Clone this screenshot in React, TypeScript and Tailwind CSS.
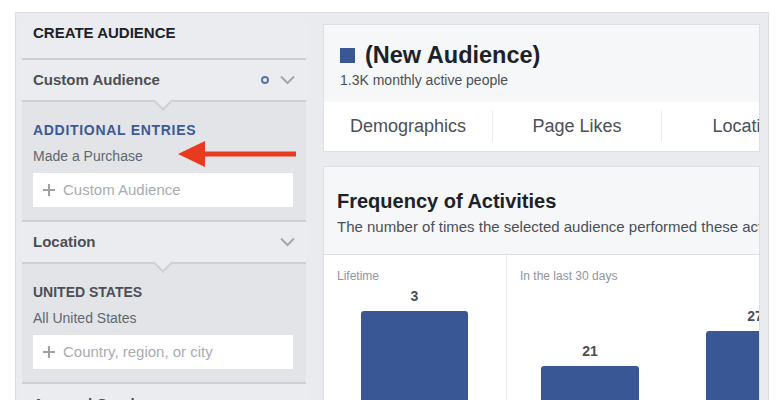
import React from 'react';

const BLUE = '#3a5795';

function Divider() {
  return <div className="h-[2px] bg-[#cdd0d4]" />;
}

function Notch() {
  return (
    <div className="absolute left-[134px] top-[-8px] z-10 h-[14px] w-[14px] rotate-45 border-r-2 border-b-2 border-[#cdd0d4] bg-[#ebecef]" />
  );
}

function Chevron() {
  return (
    <svg width="15" height="10" viewBox="0 0 15 10" fill="none">
      <path d="M1 1.5l6.5 6.5 6.5-6.5" stroke="#a3a7ad" strokeWidth="2" />
    </svg>
  );
}

function PlusInput({ placeholder }: { placeholder: string }) {
  return (
    <div className="ml-[11px] mr-[13px] mt-[8px] flex h-[34px] items-center bg-white pl-[10px]">
      <svg width="12" height="12" viewBox="0 0 12 12">
        <path d="M6 0v12M0 6h12" stroke="#9ea2a8" strokeWidth="2" />
      </svg>
      <span className="ml-[8px] text-[15px] text-[#a9acb1]">{placeholder}</span>
    </div>
  );
}

function Row({ label, dot }: { label: string; dot?: boolean }) {
  return (
    <div className="flex h-[40px] items-center justify-between bg-[#ebecef] pl-[11px] pr-[11px]">
      <span className="text-[15px] font-bold text-[#4b4f56]">{label}</span>
      <div className="flex items-center gap-[11px]">
        {dot && <span className="h-[8px] w-[8px] rounded-full border-[2.5px] border-[#5d74a8]" />}
        <Chevron />
      </div>
    </div>
  );
}

function Expanded({
  title,
  titleClass,
  sub,
  placeholder,
  children,
}: {
  title: string;
  titleClass: string;
  sub: string;
  placeholder: string;
  children?: React.ReactNode;
}) {
  return (
    <div className="relative bg-[#e3e4e7] pb-[13px] pt-[19px]">
      <Notch />
      <div className={`pl-[11px] text-[14px] font-bold leading-[18px] ${titleClass}`}>{title}</div>
      <div className="mt-[8px] pl-[11px] text-[14px] leading-[18px] text-[#606770]">{sub}</div>
      <PlusInput placeholder={placeholder} />
      {children}
    </div>
  );
}

function Sidebar() {
  return (
    <div className="w-[284px] shrink-0 bg-[#ebecef]">
      <div className="h-[40px] pl-[11px] pt-[6px] text-[15px] font-bold leading-[18px] text-[#1d2129]">
        CREATE AUDIENCE
      </div>
      <Divider />
      <Row label="Custom Audience" dot />
      <Divider />
      <Expanded
        title="ADDITIONAL ENTRIES"
        titleClass="text-[#3b5998] tracking-[0.7px]"
        sub="Made a Purchase"
        placeholder="Custom Audience"
      >
        {/* red callout arrow */}
        <svg className="absolute left-[154px] top-[38px]" width="122" height="28" viewBox="0 0 122 28">
          <polygon points="2,14 29,1 29,27" fill="#e83a1f" />
          <rect x="27" y="11.5" width="93" height="5" fill="#e83a1f" />
        </svg>
      </Expanded>
      <Divider />
      <Row label="Location" />
      <Divider />
      <Expanded
        title="UNITED STATES"
        titleClass="text-[#4b4f56]"
        sub="All United States"
        placeholder="Country, region, or city"
      />
      <Divider />
      <Row label="Age and Gender" />
    </div>
  );
}

const tabs = ['Demographics', 'Page Likes', 'Location'];

const lifetime = [{ value: '3', offset: 5 }];
const last30 = [
  { value: '21', offset: 60 },
  { value: '27', offset: 25 },
];

function Bar({ value, offset, width }: { value: string; offset: number; width: number }) {
  return (
    <div className="flex shrink-0 flex-col items-center" style={{ marginTop: offset, width }}>
      <span className="text-[14px] font-bold leading-[16px] text-[#4b4f56]">{value}</span>
      <div className="mt-[7px] h-[200px] w-full rounded-t-[3px]" style={{ backgroundColor: BLUE }} />
    </div>
  );
}

export default function App() {
  return (
    <div className="h-[400px] w-[779px] overflow-hidden bg-white pl-[15px] pt-[12px] font-['Liberation_Sans',Arial,sans-serif]">
      <div className="flex h-[500px] w-[754px] border border-[#dcdee2] bg-[#e9ebee] pl-[6px] pr-[7px] pt-[5px]">
        <Sidebar />

        <div className="ml-[17px] mt-[6px] flex w-[437px] flex-col">
          {/* audience header card */}
          <div className="border border-[#dddfe2] bg-white">
            <div className="bg-[#f6f7f9] pb-[14px] pl-[16px] pt-[17px]">
              <div className="flex items-center">
                <span className="h-[15px] w-[15px]" style={{ backgroundColor: BLUE }} />
                <span className="ml-[10px] text-[23.5px] font-bold leading-[26px] text-[#1d2129]">(New Audience)</span>
              </div>
              <div className="mt-[4px] text-[14px] leading-[16px] text-[#4b4f56]">1.3K monthly active people</div>
            </div>
            <div className="flex h-[49px] items-center overflow-hidden">
              {tabs.map((t, i) => (
                <div
                  key={t}
                  className={`flex h-[31px] w-[169px] shrink-0 items-center justify-center text-[18px] text-[#4b4f56] ${
                    i < tabs.length - 1 ? 'border-r border-[#e9ebee]' : ''
                  }`}
                >
                  {t}
                </div>
              ))}
            </div>
          </div>

          {/* frequency card */}
          <div className="mt-[14px] overflow-hidden border border-[#dddfe2] bg-white">
            <div className="border-b border-[#dddfe2] bg-[#f6f7f9] pb-[18px] pl-[13px] pt-[22px]">
              <div className="text-[20px] font-bold leading-[24px] text-[#1d2129]">Frequency of Activities</div>
              <div className="mt-[5px] whitespace-nowrap text-[15px] leading-[18px] text-[#4b4f56]">
                The number of times the selected audience performed these activities
              </div>
            </div>
            <div className="flex h-[200px]">
              <div className="w-[183px] shrink-0 border-r border-[#e9ebee] pt-[14px]">
                <div className="pl-[13px] text-[12px] leading-[14px] text-[#90949c]">Lifetime</div>
                <div className="flex pl-[37px]">
                  {lifetime.map((b) => (
                    <Bar key={b.value} {...b} width={107} />
                  ))}
                </div>
              </div>
              <div className="flex-1 pt-[14px]">
                <div className="pl-[13px] text-[12px] leading-[14px] text-[#90949c]">In the last 30 days</div>
                <div className="flex gap-[67px] pl-[34px]">
                  {last30.map((b) => (
                    <Bar key={b.value} {...b} width={98} />
                  ))}
                </div>
              </div>
            </div>
          </div>
        </div>
      </div>
    </div>
  );
}
